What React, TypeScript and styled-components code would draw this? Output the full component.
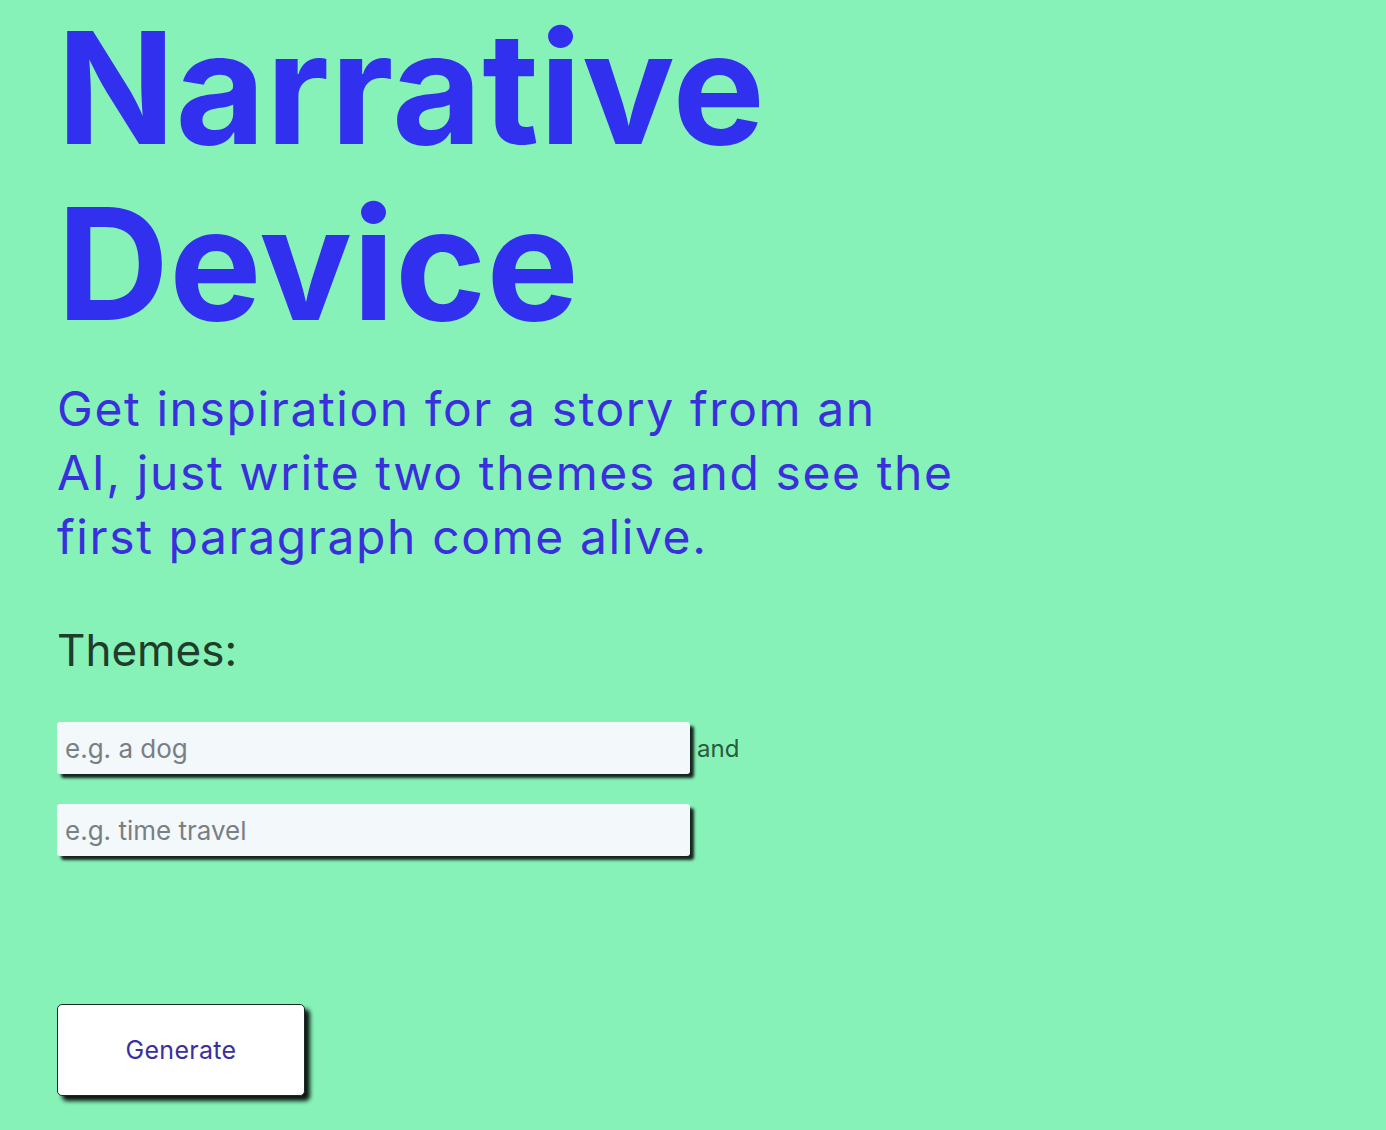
import React from "react";
import styled, { createGlobalStyle } from "styled-components";

const GlobalStyle = createGlobalStyle`
  html, body {
    margin: 0;
    padding: 0;
    background: #86f2b8;
  }
  body {
    font-family: Inter, "Noto Sans", sans-serif;
    min-height: 1130px;
  }
`;

const Page = styled.main`
  display: flex;
  flex-direction: column;
  align-items: flex-start;
  padding: 0 0 0 57px;
  min-height: 1130px;
  box-sizing: border-box;
  background: #86f2b8;
`;

const Title = styled.h1`
  margin: 0;
  font-family: Inter, sans-serif;
  font-weight: 700;
  font-size: 155px;
  line-height: 176px;
  letter-spacing: 0.4px;
  color: #3030ee;
`;

const Lead = styled.p`
  margin: 25px 0 0 0;
  max-width: 1000px;
  font-family: Inter, sans-serif;
  font-weight: 400;
  font-size: 48px;
  line-height: 64px;
  letter-spacing: 1.6px;
  color: #3a2fdc;
`;

const Label = styled.h2`
  margin: 55px 0 0 0;
  font-family: Inter, sans-serif;
  font-weight: 400;
  font-size: 44px;
  line-height: 53px;
  color: #1f3d2b;
`;

const Fields = styled.div`
  display: flex;
  flex-direction: column;
  gap: 30px;
  margin-top: 45px;
`;

const FieldRow = styled.div`
  display: flex;
  align-items: center;
  gap: 7px;
`;

const ThemeInput = styled.input`
  width: 633px;
  height: 52px;
  box-sizing: border-box;
  padding: 0 8px;
  border: none;
  border-radius: 3px;
  background: #f3f8fb;
  box-shadow: 4px 4px 3px rgba(0, 0, 0, 0.85);
  font-family: Inter, sans-serif;
  font-size: 26px;
  color: #222;
  outline: none;
  &::placeholder {
    color: #7a7f84;
  }
`;

const Joiner = styled.span`
  font-family: Inter, sans-serif;
  font-size: 24px;
  color: #2b5a3c;
`;

const GenerateButton = styled.button`
  margin-top: 148px;
  width: 248px;
  height: 92px;
  border: 1px solid #1a2a22;
  border-radius: 5px;
  background: #ffffff;
  box-shadow: 5px 5px 4px rgba(0, 0, 0, 0.9);
  font-family: Inter, sans-serif;
  font-size: 25px;
  letter-spacing: 0.3px;
  color: #3b2f9e;
  cursor: pointer;
`;

export default function App() {
  return (
    <>
      <GlobalStyle />
      <Page>
        <Title>
          Narrative
          <br />
          Device
        </Title>
        <Lead>
          Get inspiration for a story from an
          <br />
          AI, just write two themes and see the
          <br />
          first paragraph come alive.
        </Lead>
        <Label>Themes:</Label>
        <Fields>
          <FieldRow>
            <ThemeInput placeholder="e.g. a dog" />
            <Joiner>and</Joiner>
          </FieldRow>
          <FieldRow>
            <ThemeInput placeholder="e.g. time travel" />
          </FieldRow>
        </Fields>
        <GenerateButton>Generate</GenerateButton>
      </Page>
    </>
  );
}
